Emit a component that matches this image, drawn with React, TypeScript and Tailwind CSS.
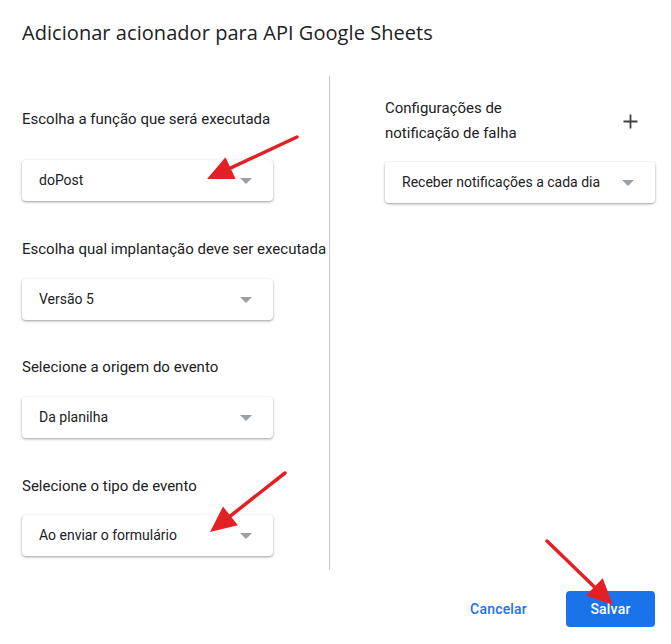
import React from "react";

const font = { fontFamily: "Roboto, 'Liberation Sans', sans-serif" };

function Select({ value, w }: { value: string; w: string }) {
  return (
    <div
      className={`${w} h-[41px] bg-white rounded-[4px] shadow-[0_1px_3px_rgba(60,64,67,0.35),0_1px_2px_rgba(60,64,67,0.2)] flex items-center pl-[17px] pr-[21px]`}
    >
      <span className="flex-1 text-[14px] text-[#202124]">{value}</span>
      <svg width="12" height="6" viewBox="0 0 12 6">
        <polygon points="0,0 12,0 6,6" fill="#9aa0a6" />
      </svg>
    </div>
  );
}

function Arrow({ x1, y1, x2, y2 }: { x1: number; y1: number; x2: number; y2: number }) {
  const dx = x2 - x1;
  const dy = y2 - y1;
  const len = Math.hypot(dx, dy);
  const ux = dx / len;
  const uy = dy / len;
  const hl = 26;
  const hw = 12;
  const bx = x2 - ux * hl;
  const by = y2 - uy * hl;
  const px = -uy;
  const py = ux;
  const pts = `${x2},${y2} ${bx + px * hw},${by + py * hw} ${bx - px * hw},${by - py * hw}`;
  return (
    <g>
      <line x1={x1} y1={y1} x2={bx + ux * 2} y2={by + uy * 2} stroke="#e32026" strokeWidth={3.5} strokeLinecap="round" />
      <polygon points={pts} fill="#e32026" />
    </g>
  );
}

export default function App() {
  return (
    <div className="relative w-[671px] h-[644px] bg-white overflow-hidden" style={font}>
      <div className="pl-[22px] pt-[19px] h-[76px]">
        <h1
          className="text-[20px] leading-[28px] text-[#202124] tracking-[0.05px]"
          style={{ fontFamily: "'Open Sans', Roboto, sans-serif", fontWeight: 450 }}
        >
          Adicionar acionador para API Google Sheets
        </h1>
      </div>
      <div className="flex h-[494px]">
        <div className="w-[330px] border-r border-[#c8c8c8] pl-[22px] pt-[33px] flex flex-col text-[15px] text-[#202124]">
          <div className="leading-[20px] mb-[31px]">Escolha a função que será executada</div>
          <Select value="doPost" w="w-[251px]" />
          <div className="leading-[20px] mt-[38px] mb-[20px] whitespace-nowrap">Escolha qual implantação deve ser executada</div>
          <Select value="Versão 5" w="w-[251px]" />
          <div className="leading-[20px] mt-[37px] mb-[20px]">Selecione a origem do evento</div>
          <Select value="Da planilha" w="w-[251px]" />
          <div className="leading-[20px] mt-[38px] mb-[19px]">Selecione o tipo de evento</div>
          <Select value="Ao enviar o formulário" w="w-[251px]" />
        </div>
        <div className="flex-1 pl-[55px] pr-[16px] pt-[20px]">
          <div className="flex items-center justify-between text-[15px] text-[#202124]">
            <div className="leading-[25px]">
              Configurações de
              <br />
              notificação de falha
            </div>
            <svg width="15" height="15" viewBox="0 0 15 15" className="mr-[17px]">
              <path d="M7.5 0.5v14M0.5 7.5h14" stroke="#3c4043" strokeWidth="1.8" />
            </svg>
          </div>
          <div className="mt-[16px]">
            <Select value="Receber notificações a cada dia" w="w-[270px]" />
          </div>
        </div>
      </div>
      <div className="flex justify-end items-center pr-[16px] pt-[21px]">
        <button className="text-[14px] font-medium text-[#1a73e8] mr-[39px] tracking-[0.2px]">Cancelar</button>
        <button className="w-[89px] h-[36px] rounded-[4px] bg-[#1a73e8] text-white text-[14px] font-medium tracking-[0.2px]">
          Salvar
        </button>
      </div>
      <svg className="absolute inset-0 pointer-events-none" width="671" height="644">
        <Arrow x1={297} y1={137} x2={207} y2={179} />
        <Arrow x1={285} y1={473} x2={210} y2={532} />
        <Arrow x1={547} y1={541} x2={613} y2={605} />
      </svg>
    </div>
  );
}
